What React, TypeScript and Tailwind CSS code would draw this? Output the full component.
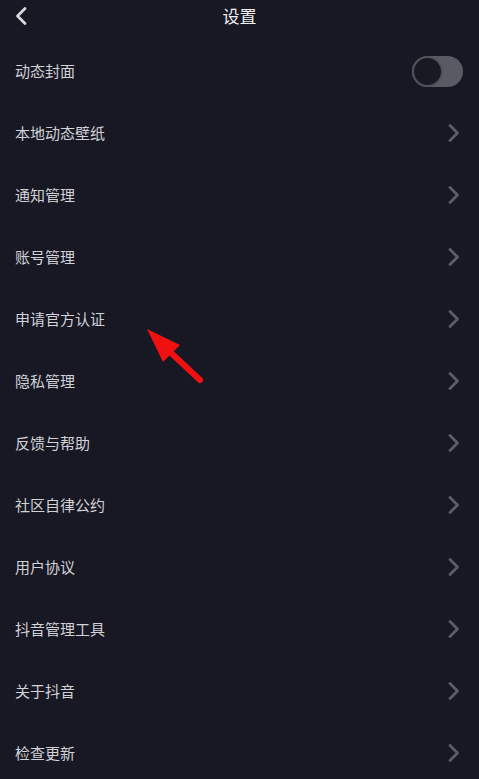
const items = [
  "本地动态壁纸",
  "通知管理",
  "账号管理",
  "申请官方认证",
  "隐私管理",
  "反馈与帮助",
  "社区自律公约",
  "用户协议",
  "抖音管理工具",
  "关于抖音",
  "检查更新",
];

const Chevron = () => (
  <svg width="14" height="20" viewBox="0 0 14 20" className="shrink-0">
    <path d="M3 2.5 L10.5 10 L3 17.5" fill="none" stroke="#5d5d67" strokeWidth="2.8" strokeLinecap="round" strokeLinejoin="round" />
  </svg>
);

export default function App() {
  return (
    <div
      className="relative w-[479px] h-[779px] overflow-hidden bg-[#171823] text-[#d2d2d8]"
      style={{ fontFamily: '"Noto Sans CJK SC", "Noto Sans", sans-serif' }}
    >
      {/* Header */}
      <div className="relative h-[30px] flex items-center justify-center">
        <svg width="14" height="20" viewBox="0 0 14 20" className="absolute left-[14px] top-[6px]">
          <path d="M11 2.5 L3.5 10 L11 17.5" fill="none" stroke="#d8d8dc" strokeWidth="2.8" strokeLinecap="round" strokeLinejoin="round" />
        </svg>
        <span className="text-[17px] text-[#f0f0f2] leading-none">设置</span>
      </div>

      {/* List */}
      <div className="pt-[10px]">
        <div className="h-[62px] flex items-center justify-between pl-[15px] pr-[16px]">
          <span className="text-[15px] leading-none -mt-[2px]">动态封面</span>
          <div className="w-[51px] h-[31px] rounded-full bg-[#5a5a64] relative">
            <div className="absolute left-0 top-0 w-[31px] h-[31px] rounded-full bg-[#181923] border-2 border-[#50505a]" />
          </div>
        </div>
        {items.map((t) => (
          <div key={t} className="h-[62px] flex items-center justify-between pl-[15px] pr-[18px]">
            <span className="text-[15px] leading-none -mt-[2px]">{t}</span>
            <Chevron />
          </div>
        ))}
      </div>

      {/* Red annotation arrow */}
      <svg className="absolute left-0 top-0 pointer-events-none" width="479" height="779">
        <line x1="200" y1="380" x2="168" y2="350" stroke="#f01010" strokeWidth="6" strokeLinecap="round" />
        <polygon points="147,329 180,345 163,362" fill="#f01010" />
      </svg>
    </div>
  );
}
